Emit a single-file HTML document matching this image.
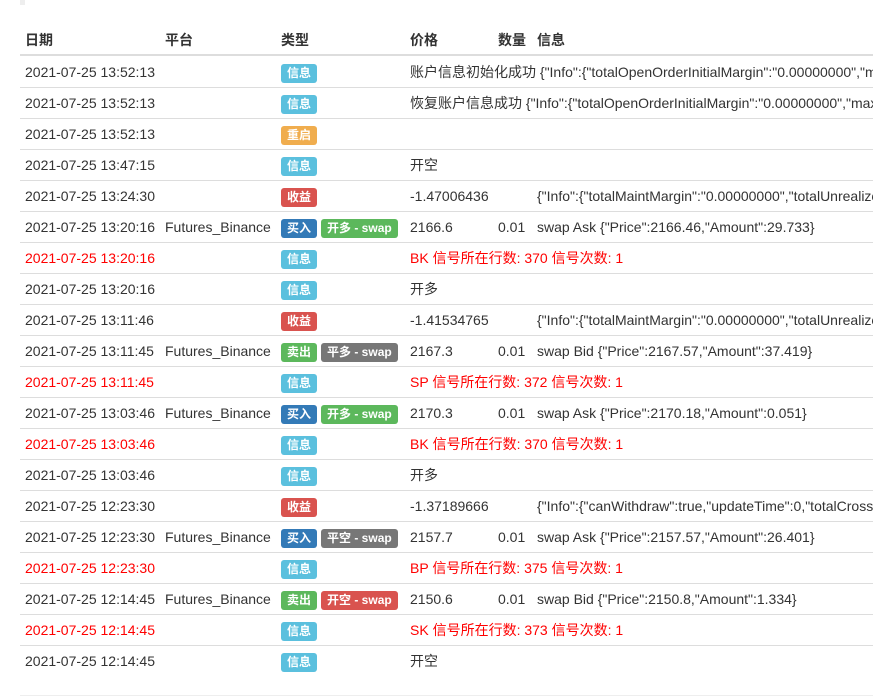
<!DOCTYPE html><html><head><meta charset="utf-8"><style>
html,body{margin:0;width:873px;height:697px;overflow:hidden}
body{background:#fff;font-family:"Liberation Sans","Noto Sans CJK SC",sans-serif;font-size:14px;color:#333;position:relative}
.r{position:absolute;left:20px;width:853px;height:30px;border-bottom:1px solid #ddd;overflow:hidden}
.r span,.h span{position:absolute;top:0;line-height:30px;white-space:nowrap}
.red{color:#f00}
.l{display:inline-block;font-size:12px;font-weight:bold;color:#fff;line-height:19px;height:19px;padding:0 6px;border-radius:3px;vertical-align:middle;margin-right:4px}
.i{background:#5bc0de}.w{background:#f0ad4e}.d{background:#d9534f}.p{background:#337ab7}.s{background:#5cb85c}.g{background:#777}
.h{position:absolute;left:20px;top:25px;width:853px;height:29px;border-bottom:2px solid #ddd;font-weight:bold}
</style></head><body>
<div style="position:absolute;left:20px;top:0;width:5px;height:5px;background:#eee"></div>
<div class="h"><span style="left:5px">日期</span><span style="left:145px">平台</span><span style="left:261px">类型</span><span style="left:390px">价格</span><span style="left:478px">数量</span><span style="left:517px">信息</span></div>
<div class="r" style="top:57px"><span style="left:5px">2021-07-25 13:52:13</span><span style="left:261px"><b class="l i">信息</b></span><span style="left:390px">账户信息初始化成功 {"Info":{"totalOpenOrderInitialMargin":"0.00000000","maxWithdrawAmount"</span></div>
<div class="r" style="top:88px"><span style="left:5px">2021-07-25 13:52:13</span><span style="left:261px"><b class="l i">信息</b></span><span style="left:390px">恢复账户信息成功 {"Info":{"totalOpenOrderInitialMargin":"0.00000000","maxWithdrawAmount"</span></div>
<div class="r" style="top:119px"><span style="left:5px">2021-07-25 13:52:13</span><span style="left:261px"><b class="l w">重启</b></span></div>
<div class="r" style="top:150px"><span style="left:5px">2021-07-25 13:47:15</span><span style="left:261px"><b class="l i">信息</b></span><span style="left:390px">开空</span></div>
<div class="r" style="top:181px"><span style="left:5px">2021-07-25 13:24:30</span><span style="left:261px"><b class="l d">收益</b></span><span style="left:390px">-1.47006436</span><span style="left:517px">{"Info":{"totalMaintMargin":"0.00000000","totalUnrealizedProfit"</span></div>
<div class="r" style="top:212px"><span style="left:5px">2021-07-25 13:20:16</span><span style="left:145px">Futures_Binance</span><span style="left:261px"><b class="l p">买入</b><b class="l s">开多 - swap</b></span><span style="left:390px">2166.6</span><span style="left:478px">0.01</span><span style="left:517px">swap Ask {"Price":2166.46,"Amount":29.733}</span></div>
<div class="r red" style="top:243px"><span style="left:5px">2021-07-25 13:20:16</span><span style="left:261px"><b class="l i">信息</b></span><span style="left:390px">BK 信号所在行数: 370 信号次数: 1</span></div>
<div class="r" style="top:274px"><span style="left:5px">2021-07-25 13:20:16</span><span style="left:261px"><b class="l i">信息</b></span><span style="left:390px">开多</span></div>
<div class="r" style="top:305px"><span style="left:5px">2021-07-25 13:11:46</span><span style="left:261px"><b class="l d">收益</b></span><span style="left:390px">-1.41534765</span><span style="left:517px">{"Info":{"totalMaintMargin":"0.00000000","totalUnrealizedProfit"</span></div>
<div class="r" style="top:336px"><span style="left:5px">2021-07-25 13:11:45</span><span style="left:145px">Futures_Binance</span><span style="left:261px"><b class="l s">卖出</b><b class="l g">平多 - swap</b></span><span style="left:390px">2167.3</span><span style="left:478px">0.01</span><span style="left:517px">swap Bid {"Price":2167.57,"Amount":37.419}</span></div>
<div class="r red" style="top:367px"><span style="left:5px">2021-07-25 13:11:45</span><span style="left:261px"><b class="l i">信息</b></span><span style="left:390px">SP 信号所在行数: 372 信号次数: 1</span></div>
<div class="r" style="top:398px"><span style="left:5px">2021-07-25 13:03:46</span><span style="left:145px">Futures_Binance</span><span style="left:261px"><b class="l p">买入</b><b class="l s">开多 - swap</b></span><span style="left:390px">2170.3</span><span style="left:478px">0.01</span><span style="left:517px">swap Ask {"Price":2170.18,"Amount":0.051}</span></div>
<div class="r red" style="top:429px"><span style="left:5px">2021-07-25 13:03:46</span><span style="left:261px"><b class="l i">信息</b></span><span style="left:390px">BK 信号所在行数: 370 信号次数: 1</span></div>
<div class="r" style="top:460px"><span style="left:5px">2021-07-25 13:03:46</span><span style="left:261px"><b class="l i">信息</b></span><span style="left:390px">开多</span></div>
<div class="r" style="top:491px"><span style="left:5px">2021-07-25 12:23:30</span><span style="left:261px"><b class="l d">收益</b></span><span style="left:390px">-1.37189666</span><span style="left:517px">{"Info":{"canWithdraw":true,"updateTime":0,"totalCrossUnPnl"</span></div>
<div class="r" style="top:522px"><span style="left:5px">2021-07-25 12:23:30</span><span style="left:145px">Futures_Binance</span><span style="left:261px"><b class="l p">买入</b><b class="l g">平空 - swap</b></span><span style="left:390px">2157.7</span><span style="left:478px">0.01</span><span style="left:517px">swap Ask {"Price":2157.57,"Amount":26.401}</span></div>
<div class="r red" style="top:553px"><span style="left:5px">2021-07-25 12:23:30</span><span style="left:261px"><b class="l i">信息</b></span><span style="left:390px">BP 信号所在行数: 375 信号次数: 1</span></div>
<div class="r" style="top:584px"><span style="left:5px">2021-07-25 12:14:45</span><span style="left:145px">Futures_Binance</span><span style="left:261px"><b class="l s">卖出</b><b class="l d">开空 - swap</b></span><span style="left:390px">2150.6</span><span style="left:478px">0.01</span><span style="left:517px">swap Bid {"Price":2150.8,"Amount":1.334}</span></div>
<div class="r red" style="top:615px"><span style="left:5px">2021-07-25 12:14:45</span><span style="left:261px"><b class="l i">信息</b></span><span style="left:390px">SK 信号所在行数: 373 信号次数: 1</span></div>
<div class="r" style="top:646px;border:0"><span style="left:5px">2021-07-25 12:14:45</span><span style="left:261px"><b class="l i">信息</b></span><span style="left:390px">开空</span></div>
<div style="position:absolute;left:20px;top:695px;width:853px;height:1px;background:#eee"></div>
</body></html>
